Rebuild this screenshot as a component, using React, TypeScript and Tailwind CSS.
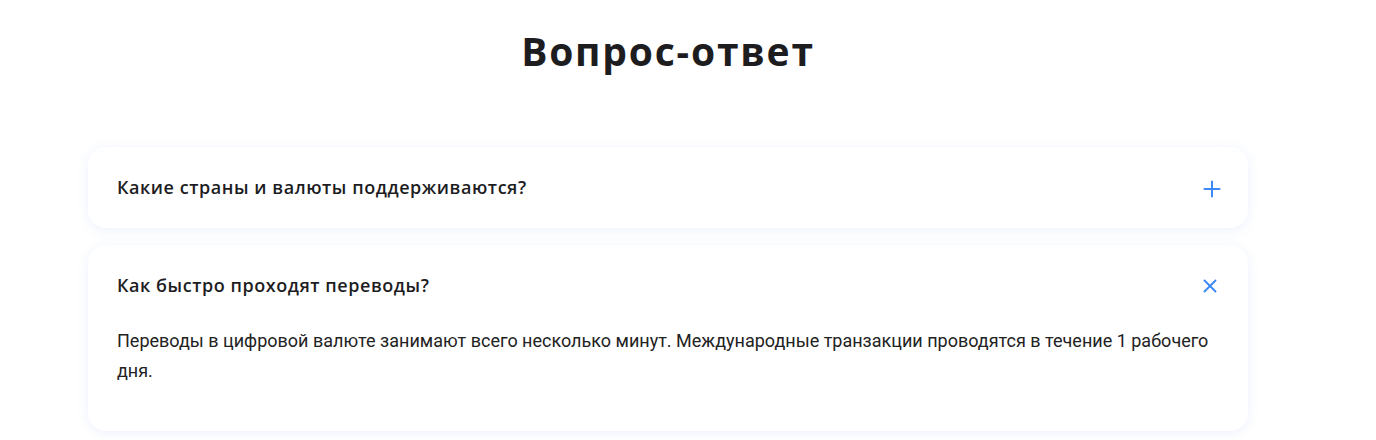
import { Plus, X } from "lucide-react";

const faq = [
    {
        q: "Какие страны и валюты поддерживаются?",
        a: null,
    },
    {
        q: "Как быстро проходят переводы?",
        a: "Переводы в цифровой валюте занимают всего несколько минут. Международные транзакции проводятся в течение 1 рабочего дня.",
    },
];

export default function App() {
    return (
        <div className="min-h-[440px] bg-white pl-[88px] pt-[27px] text-[#1d1d1f]">
            <div className="w-[1160px]">
                <h1 className="text-center font-['Open_Sans',sans-serif] text-[39px] font-bold leading-[48px] tracking-[1.8px]">
                    Вопрос-ответ
                </h1>

                <div className="mt-[72px] flex flex-col gap-[17px]">
                    {faq.map((item) => (
                        <div
                            key={item.q}
                            className="rounded-[18px] bg-white px-[29px] py-[28px] shadow-[0_2px_12px_rgba(110,150,230,0.13)]"
                        >
                            <div className="flex h-[25px] items-center justify-between">
                                <h3 className="font-['Open_Sans',sans-serif] text-[18px] font-semibold leading-[25px] tracking-[0.55px]">
                                    {item.q}
                                </h3>
                                {item.a ? (
                                    <X size={22} strokeWidth={2.1} className="mr-[-2px] text-[#3b89f5]" />
                                ) : (
                                    <Plus size={26} strokeWidth={1.85} className="mr-[-6px] mt-[3px] text-[#3b89f5]" />
                                )}
                            </div>
                            {item.a && (
                                <p className="mt-[28px] mb-[17px] pr-[10px] font-['Roboto',sans-serif] text-[18px] leading-[30px] text-[#222]">
                                    {item.a}
                                </p>
                            )}
                        </div>
                    ))}
                </div>
            </div>
        </div>
    );
}
